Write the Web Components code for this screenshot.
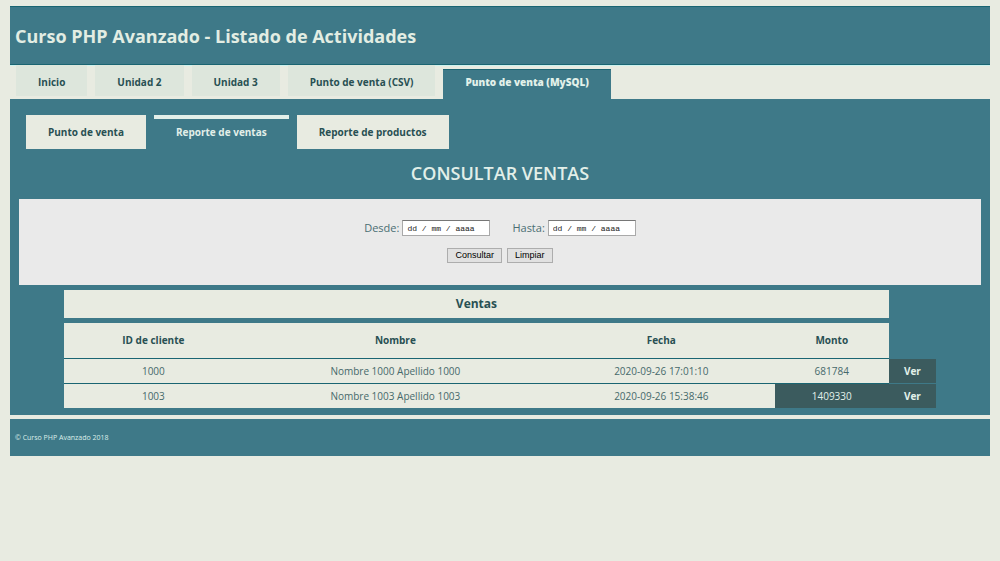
<!DOCTYPE html>
<html lang="es">
<head>
<meta charset="utf-8">
<title>Curso PHP Avanzado - Listado de Actividades</title>
<style>
body {
  --teal: #3e7988; --deep: #1a6572; --cream: #e8ebe1; --ink: #285053; --slate: #3b5b5e;
  margin: 6px 10px; background: #e8ebe1; color: #285053;
  font: 10px/14px "Open Sans", sans-serif;
}
</style>
</head>
<body>
<sales-page></sales-page>
<script>
const define = (name, html) => customElements.define(name, class extends HTMLElement {
  constructor() {
    super();
    this.attachShadow({ mode: 'open' }).innerHTML = html;
  }
});

define('site-header', `
<style>
:host { display: block; background: var(--teal); border: solid var(--deep); border-width: 1px 0; box-shadow: 0 1px #cdf2ee; }
h1 { margin: 0; padding: 17px 5px 16px; font-size: 18px; line-height: 24px; font-weight: 750; color: #e2ede3; }
</style>
<h1><slot></slot></h1>`);

define('main-tab', `
<style>
:host { display: block; }
a { display: block; padding: 10px 22px 7px; background: #dde6dc; color: var(--ink); font-weight: 700; text-decoration: none; white-space: nowrap; }
:host([active]) a { margin-top: 4px; padding: 5px 22px 10px; border-top: 1px solid var(--deep); background: var(--teal); color: #e2f1ea; font-weight: 800; }
</style>
<a href="#"><slot></slot></a>`);

define('sub-tab', `
<style>
:host { display: block; }
a { display: block; padding: 10px 22px; background: var(--cream); color: var(--ink); font-weight: 700; text-decoration: none; white-space: nowrap; }
:host([active]) a { padding-top: 6px; border-top: 4px solid #e2efe9; background: var(--teal); color: #e2efe9; }
</style>
<a href="#"><slot></slot></a>`);

define('tab-bar', `
<style>
:host { display: flex; align-items: flex-start; gap: 8px; }
</style>
<slot></slot>`);

define('date-filter', `
<style>
:host { display: block; padding: 21px 0 22px; background: #eaeaea; color: #4b6e73; }
form { display: grid; gap: 12px; justify-content: center; }
.dates { display: flex; gap: 22px; }
.field { display: flex; align-items: center; gap: 3px; font-size: 11px; line-height: 16px; }
input { box-sizing: border-box; width: 88px; height: 16px; padding: 0 4px; border: 1px solid #a9a9a9; border-top-color: #767676; background: #fff; color: #222; font: 8px/14px "Liberation Mono", monospace; }
input::placeholder { color: #222; opacity: 1; }
.actions { display: flex; justify-content: center; gap: 5px; }
button { box-sizing: border-box; height: 15px; padding: 0 7px; border: 1px solid #adadad; background: #e1e1e1; color: #000; font: 9px/13px "Liberation Sans", sans-serif; }
</style>
<form>
  <div class="dates">
    <div class="field"><label for="from">Desde:</label><input id="from" placeholder="dd / mm / aaaa"></div>
    <div class="field"><label for="to">Hasta:</label><input id="to" placeholder="dd / mm / aaaa"></div>
  </div>
  <div class="actions"><button type="button">Consultar</button><button type="reset">Limpiar</button></div>
</form>`);

define('sales-table', `
<style>
:host { display: block; margin: 5px 45px 7px; }
table { width: 100%; border-collapse: separate; border-spacing: 0; table-layout: fixed; }
col.id { width: 20.5%; } col.name { width: 35%; } col.date { width: 26%; } col.total { width: 13.1%; }
th, td { padding: 0; text-align: center; background: var(--cream); }
td { color: #46696b; }
.title { border-bottom: 5px solid var(--teal); font-size: 12px; line-height: 28px; font-weight: 700; }
.heads th { line-height: 35px; font-weight: 700; border-bottom: 1px solid var(--deep); }
tbody td { line-height: 24px; border-bottom: 1px solid var(--deep); }
tbody tr:last-child td { border-bottom: 0; }
tbody td.view, tbody td.max { background: var(--slate); color: #e2f1ea; border-bottom-color: var(--teal); }
td.none, .heads td.none { background: none; }
a { color: inherit; font-weight: 700; text-decoration: none; }
</style>
<table>
  <colgroup><col class="id"><col class="name"><col class="date"><col class="total"><col></colgroup>
  <thead>
    <tr><th class="title" colspan="4">Ventas</th><td class="none"></td></tr>
    <tr class="heads"><th>ID de cliente</th><th>Nombre</th><th>Fecha</th><th>Monto</th><td class="none"></td></tr>
  </thead>
  <tbody>
    <tr><td>1000</td><td>Nombre 1000 Apellido 1000</td><td>2020-09-26 17:01:10</td><td>681784</td><td class="view"><a href="#">Ver</a></td></tr>
    <tr><td>1003</td><td>Nombre 1003 Apellido 1003</td><td>2020-09-26 15:38:46</td><td class="max">1409330</td><td class="view"><a href="#">Ver</a></td></tr>
  </tbody>
</table>`);

define('site-footer', `
<style>
:host { display: block; margin-top: 4px; padding: 12px 5px 11px; background: var(--teal); color: #dceee9; font-size: 7px; line-height: 14px; }
</style>
<slot></slot>`);

define('sales-page', `
<style>
:host { display: block; }
tab-bar.top { padding: 0 6px; }
tab-bar.sub { padding: 0 7px; }
main { display: flow-root; padding: 16px 9px 0; background: var(--teal); }
h2 { margin: 12px 0 14px; text-align: center; font-size: 18px; line-height: 24px; font-weight: 600; color: #e2efe9; }
</style>
<site-header>Curso PHP Avanzado - Listado de Actividades</site-header>
<tab-bar class="top">
  <main-tab>Inicio</main-tab><main-tab>Unidad 2</main-tab><main-tab>Unidad 3</main-tab><main-tab>Punto de venta (CSV)</main-tab><main-tab active>Punto de venta (MySQL)</main-tab>
</tab-bar>
<main>
  <tab-bar class="sub">
    <sub-tab>Punto de venta</sub-tab><sub-tab active>Reporte de ventas</sub-tab><sub-tab>Reporte de productos</sub-tab>
  </tab-bar>
  <h2>CONSULTAR VENTAS</h2>
  <date-filter></date-filter>
  <sales-table></sales-table>
</main>
<site-footer>© Curso PHP Avanzado 2018</site-footer>`);
</script>
</body>
</html>
